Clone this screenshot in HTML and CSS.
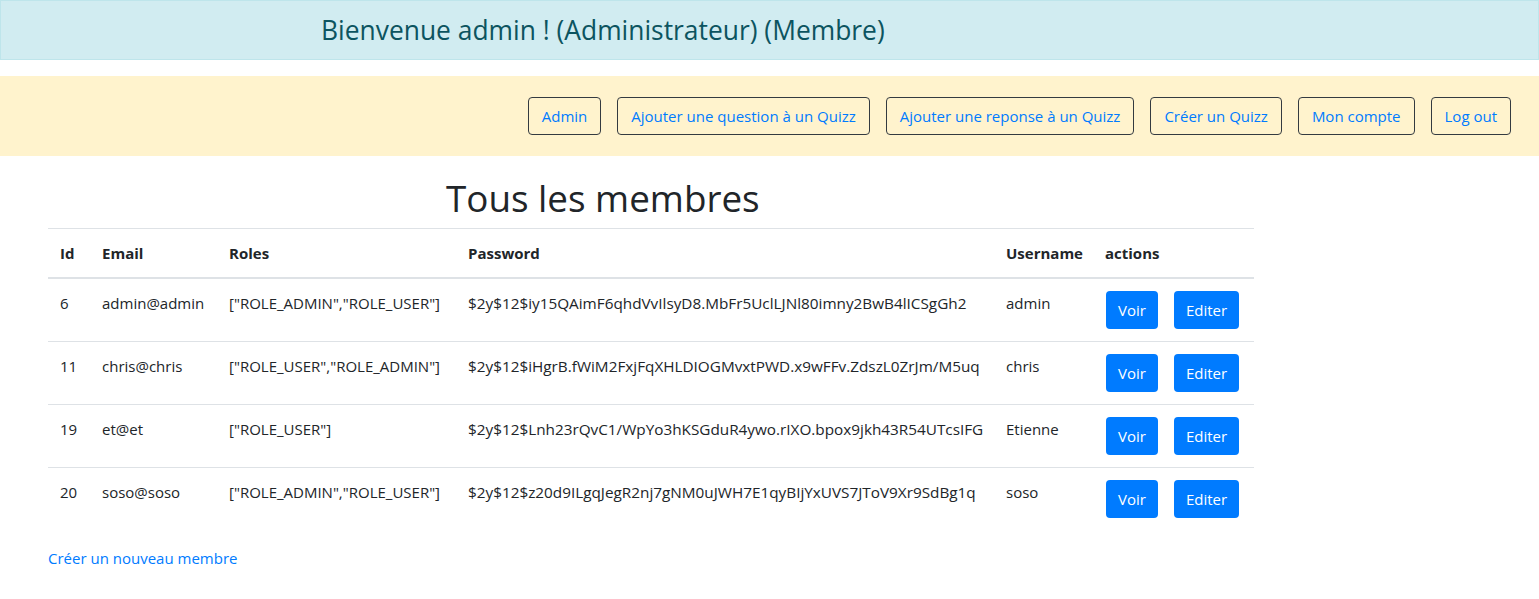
FILE: index.html
```html
<!DOCTYPE html>
<html lang="fr">
<head>
<meta charset="utf-8">
<title>Tous les membres</title>
<link rel="stylesheet" href="styles.css">
</head>
<body>
<div class="alert">
  <h3 class="welcome">Bienvenue admin ! (Administrateur) (Membre)</h3>
</div>
<nav class="topnav">
  <a class="btn-outline" href="#">Admin</a>
  <a class="btn-outline" href="#">Ajouter une question à un Quizz</a>
  <a class="btn-outline" href="#">Ajouter une reponse à un Quizz</a>
  <a class="btn-outline" href="#">Créer un Quizz</a>
  <a class="btn-outline" href="#">Mon compte</a>
  <a class="btn-outline" href="#">Log out</a>
</nav>
<main class="content">
  <h1 class="title">Tous les membres</h1>
  <table class="table">
    <colgroup>
      <col class="c-id"><col class="c-email"><col class="c-roles"><col class="c-pass"><col class="c-user"><col class="c-act">
    </colgroup>
    <thead>
      <tr><th>Id</th><th>Email</th><th>Roles</th><th>Password</th><th>Username</th><th>actions</th></tr>
    </thead>
    <tbody>
      <tr>
        <td>6</td><td>admin@admin</td><td>["ROLE_ADMIN","ROLE_USER"]</td>
        <td class="pass">$2y$12$iy15QAimF6qhdVvIlsyD8.MbFr5UclLJNl80imny2BwB4lICSgGh2</td><td>admin</td>
        <td class="actions"><a class="btn" href="#">Voir</a><a class="btn" href="#">Editer</a></td>
      </tr>
      <tr>
        <td>11</td><td>chris@chris</td><td>["ROLE_USER","ROLE_ADMIN"]</td>
        <td class="pass">$2y$12$iHgrB.fWiM2FxjFqXHLDIOGMvxtPWD.x9wFFv.ZdszL0ZrJm/M5uq</td><td>chris</td>
        <td class="actions"><a class="btn" href="#">Voir</a><a class="btn" href="#">Editer</a></td>
      </tr>
      <tr>
        <td>19</td><td>et@et</td><td>["ROLE_USER"]</td>
        <td class="pass">$2y$12$Lnh23rQvC1/WpYo3hKSGduR4ywo.rIXO.bpox9jkh43R54UTcsIFG</td><td>Etienne</td>
        <td class="actions"><a class="btn" href="#">Voir</a><a class="btn" href="#">Editer</a></td>
      </tr>
      <tr>
        <td>20</td><td>soso@soso</td><td>["ROLE_ADMIN","ROLE_USER"]</td>
        <td class="pass">$2y$12$z20d9ILgqJegR2nj7gNM0uJWH7E1qyBIjYxUVS7JToV9Xr9SdBg1q</td><td>soso</td>
        <td class="actions"><a class="btn" href="#">Voir</a><a class="btn" href="#">Editer</a></td>
      </tr>
    </tbody>
  </table>
  <a class="new-link" href="#">Créer un nouveau membre</a>
</main>
</body>
</html>
```
FILE: styles.css
```css
* { box-sizing: border-box; }
html, body { margin: 0; padding: 0; }
body {
  font-family: "Open Sans", "Noto Sans", sans-serif;
  font-size: 15px;
  line-height: 24px;
  color: #212529;
  background: #fff;
}
a { text-decoration: none; }

.alert {
  background: #d1ecf1;
  border: 1px solid #bee5eb;
  height: 60px;
  display: flex;
  align-items: center;
  padding-left: 320px;
}
.welcome {
  margin: 0;
  font-weight: 400;
  font-size: 26.4px;
  line-height: 32px;
  color: #0c5460;
}

.topnav {
  margin-top: 16px;
  background: #fff3cd;
  height: 80px;
  display: flex;
  justify-content: flex-end;
  align-items: center;
  gap: 16px;
  padding-right: 28px;
}
.btn-outline {
  display: inline-flex;
  align-items: center;
  height: 38px;
  padding: 0 13px;
  border: 1px solid #343a40;
  border-radius: 4px;
  color: #007bff;
  font-size: 15px;
}

.content {
  padding: 0 48px;
}
.title {
  margin: 18px 0 6px;
  padding-left: 398px;
  font-weight: 400;
  font-size: 36.8px;
  line-height: 48px;
  color: #212529;
}
.table {
  width: 1206px;
  border-collapse: collapse;
  table-layout: fixed;
}
.c-id { width: 42px; }
.c-email { width: 127px; }
.c-roles { width: 239px; }
.c-pass { width: 538px; }
.c-user { width: 99px; }
.c-act { width: 161px; }
.table th, .table td {
  padding: 12px;
  text-align: left;
  vertical-align: top;
  border-top: 1px solid #dee2e6;
  white-space: nowrap;
}
.table th {
  font-weight: 700;
  border-bottom: 2px solid #dee2e6;
}
.table tbody td { height: 63px; }
.table td.pass { font-size: 15.3px; }
.table td.actions { padding-left: 13px; padding-right: 0; }
.btn {
  display: inline-block;
  height: 38px;
  line-height: 38px;
  padding: 0 12px;
  border-radius: 4px;
  background: #007bff;
  color: #fff;
  vertical-align: top;
}
.btn + .btn { margin-left: 16px; }
.new-link {
  display: inline-block;
  margin-top: 15px;
  color: #007bff;
}
```
